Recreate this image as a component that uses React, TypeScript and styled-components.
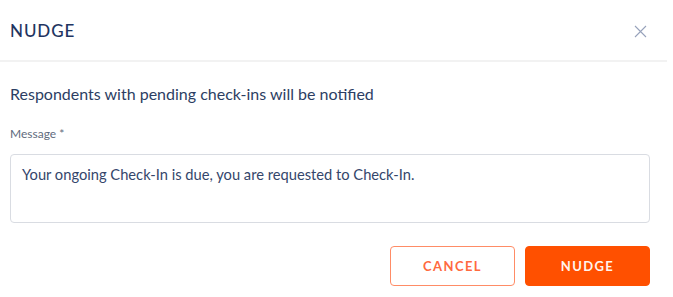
import React from "react";
import styled, { createGlobalStyle } from "styled-components";

const Global = createGlobalStyle`
  html, body { margin: 0; padding: 0; background: #ffffff; }
  body { font-family: Lato, "Open Sans", sans-serif; }
  * { box-sizing: border-box; }
`;

const Dialog = styled.div`
  width: 667px;
  background: #ffffff;
  display: flex;
  flex-direction: column;
`;

const Header = styled.div`
  height: 62px;
  display: flex;
  align-items: center;
  justify-content: space-between;
  padding: 0 20px 0 10px;
  border-bottom: 2px solid #f2f2f2;
`;

const Title = styled.h2`
  margin: 0;
  font-size: 17px;
  font-weight: 500;
  color: #1f3561;
  letter-spacing: 0.9px;
`;

const CloseButton = styled.button`
  border: none;
  background: none;
  padding: 0;
  width: 14px;
  height: 14px;
  display: flex;
  align-items: center;
  justify-content: center;
  cursor: pointer;
  margin-top: 2px;
`;

const Body = styled.div`
  padding: 22px 17px 0 10px;
  display: flex;
  flex-direction: column;
`;

const Info = styled.p`
  margin: 0;
  font-size: 16px;
  color: #2c3e63;
  line-height: 20px;
`;

const Label = styled.label`
  margin-top: 22px;
  font-size: 12px;
  color: #5f6b7d;
  line-height: 16px;
`;

const TextArea = styled.textarea`
  margin-top: 12px;
  width: 640px;
  height: 69px;
  border: 1px solid #d9dce2;
  border-radius: 4px;
  padding: 9px 11px;
  font-family: Lato, "Open Sans", sans-serif;
  font-size: 14.7px;
  line-height: 20px;
  color: #34466b;
  resize: none;
  outline: none;
`;

const Actions = styled.div`
  display: flex;
  justify-content: flex-end;
  gap: 10px;
  padding: 23px 17px 0 0;
`;

const Button = styled.button<{ $primary?: boolean }>`
  width: 125px;
  height: 40px;
  border-radius: 4px;
  font-family: Lato, "Open Sans", sans-serif;
  font-size: 13px;
  font-weight: 700;
  letter-spacing: 1.4px;
  text-transform: uppercase;
  cursor: pointer;
  border: 1px solid ${(p) => (p.$primary ? "#ff5000" : "#ff8c66")};
  background: ${(p) => (p.$primary ? "#ff5000" : "#ffffff")};
  color: ${(p) => (p.$primary ? "#fff4ee" : "#ff6a3f")};
`;

export default function App() {
  return (
    <>
      <Global />
      <Dialog>
        <Header>
          <Title>NUDGE</Title>
          <CloseButton aria-label="Close">
            <svg width="13" height="13" viewBox="0 0 13 13">
              <path d="M1 1L12 12M12 1L1 12" stroke="#97a2bb" strokeWidth="1.1" />
            </svg>
          </CloseButton>
        </Header>
        <Body>
          <Info>Respondents with pending check-ins will be notified</Info>
          <Label>Message *</Label>
          <TextArea defaultValue="Your ongoing Check-In is due, you are requested to Check-In." />
        </Body>
        <Actions>
          <Button>Cancel</Button>
          <Button $primary>Nudge</Button>
        </Actions>
      </Dialog>
    </>
  );
}
